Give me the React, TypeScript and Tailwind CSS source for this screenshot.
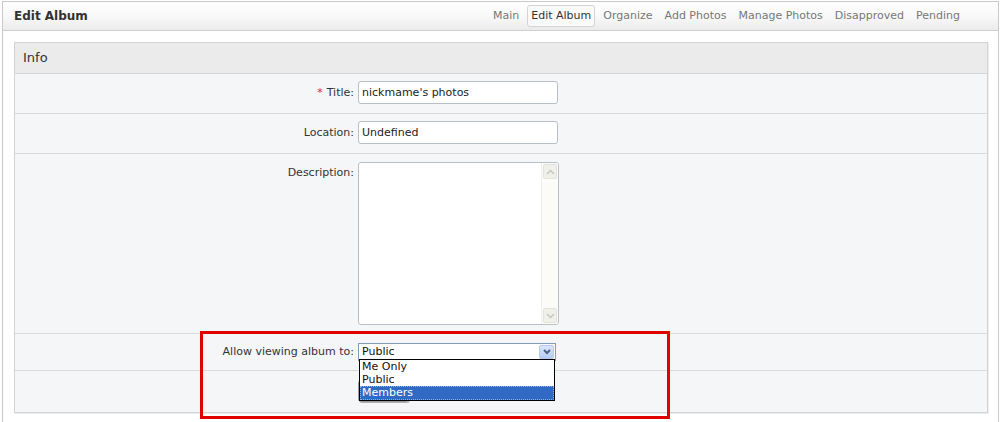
import React from 'react';

const tabs = ['Main', 'Edit Album', 'Organize', 'Add Photos', 'Manage Photos', 'Disapproved', 'Pending'];

function Row({ label, required, h, top, children, last }: { label: string; required?: boolean; h: string; top?: boolean; children?: React.ReactNode; last?: boolean }) {
  return (
    <div className={`flex ${h} ${last ? '' : 'border-b border-[#dadada]'} bg-[#f4f6f8]`}>
      <div className={`w-[343px] pr-[4px] text-right text-[11px] text-[#333] flex justify-end ${top ? 'items-start pt-[11px]' : 'items-center'}`}>
        {required && <span className="text-[#e02020] mr-[4px]">*</span>}
        {label}
      </div>
      <div className="flex-1 relative">{children}</div>
    </div>
  );
}

export default function App() {
  return (
    <div className="w-[1001px] h-[422px] bg-white overflow-hidden relative font-['DejaVu_Sans','Liberation_Sans',sans-serif]">
      <div className="ml-[2px] mr-[2px] mt-[1px] border border-[#c9c9c9] h-[440px]">
        {/* header */}
        <div className="h-[29px] border-b border-[#cfcfcf] bg-gradient-to-b from-white via-[#f9f9f9] to-[#ebebeb] flex items-center justify-between pl-[11px] pr-[34px]">
          <span className="text-[12px] font-bold text-[#333]">Edit Album</span>
          <div className="flex items-center gap-[4px]">
            {tabs.map(t => (
              <span
                key={t}
                className={
                  t === 'Edit Album'
                    ? 'px-[3px] h-[22px] flex items-center border border-[#d4d4d4] rounded-[3px] bg-[#fafafa] text-[11px] text-[#333]'
                    : 'px-[4px] h-[22px] flex items-center text-[11px] text-[#777]'
                }
              >
                {t}
              </span>
            ))}
          </div>
        </div>

        {/* body */}
        <div className="pt-[11px] pl-[11px] pr-[10px]">
          <div className="border border-[#d3d3d3] shadow-[1px_1px_0_#eeeeee]">
            <div className="h-[31px] bg-[#ebebeb] border-b border-[#d6d6d6] flex items-center pl-[8px] text-[13px] text-[#333]">Info</div>

            <Row label="Title:" required h="h-[40px]">
              <input
                readOnly
                value="nickmame's photos"
                className="absolute left-0 top-[7px] w-[200px] h-[23px] border border-[#b8bfc6] rounded-[3px] bg-white px-[3px] text-[11px] text-[#222] outline-none font-['DejaVu_Sans',sans-serif]"
              />
            </Row>
            <Row label="Location:" h="h-[40px]">
              <input
                readOnly
                value="Undefined"
                className="absolute left-0 top-[7px] w-[200px] h-[23px] border border-[#b8bfc6] rounded-[3px] bg-white px-[3px] text-[11px] text-[#222] outline-none font-['DejaVu_Sans',sans-serif]"
              />
            </Row>
            <Row label="Description:" top h="h-[180px]">
              <div className="absolute left-0 top-[8px] w-[201px] h-[163px] border border-[#b8bfc6] rounded-[3px] bg-white flex justify-end overflow-hidden">
                <div className="w-[17px] h-full bg-[#fbfbf8] border-l border-[#f0f0ea] flex flex-col justify-between p-[1px]">
                  <div className="h-[15px] rounded-[2px] border border-[#e3e3dc] bg-[#f0f0ea] flex items-center justify-center">
                    <svg width="9" height="6" viewBox="0 0 9 6"><path d="M1 5 L4.5 1.5 L8 5" fill="none" stroke="#c6c6bd" strokeWidth="1.5" /></svg>
                  </div>
                  <div className="h-[15px] rounded-[2px] border border-[#e3e3dc] bg-[#f0f0ea] flex items-center justify-center">
                    <svg width="9" height="6" viewBox="0 0 9 6"><path d="M1 1 L4.5 4.5 L8 1" fill="none" stroke="#c6c6bd" strokeWidth="1.5" /></svg>
                  </div>
                </div>
              </div>
            </Row>
            <Row label="Allow viewing album to:" h="h-[37px]">
              <div className="absolute left-0 top-[9px] w-[198px] h-[18px] border border-[#7f9db9] bg-white flex items-center justify-between">
                <span className="pl-[3px] text-[11px] text-[#111]">Public</span>
                <div className="w-[15px] h-[14px] mr-[1px] rounded-[2px] bg-gradient-to-b from-[#dbe6fd] to-[#b6ccf8] border border-[#b4c8f5] flex items-center justify-center">
                  <svg width="8" height="6" viewBox="0 0 8 6"><path d="M1 1 L4 4 L7 1" fill="none" stroke="#4d6185" strokeWidth="2" /></svg>
                </div>
              </div>
            </Row>
            <Row label="" h="h-[41px]" last>
              <div className="absolute left-0 top-[9px] w-[51px] h-[22px] border border-[#9a9a9a] rounded-[3px] bg-gradient-to-b from-white to-[#dcdcdc] shadow-[1px_1px_0_#b0b0b0]" />
              {/* open dropdown list */}
              <div className="absolute left-[1px] top-[-12px] w-[196px] border border-black bg-white text-[11px] leading-[13px] text-[#111] z-10">
                <div className="pl-[2px] h-[13px]">Me Only</div>
                <div className="pl-[2px] h-[13px]">Public</div>
                <div className="pl-[2px] h-[14px] bg-[#316ac5] text-white outline outline-1 outline-dotted outline-[#8fb0e8] -outline-offset-1">Members</div>
              </div>
            </Row>
          </div>
        </div>
      </div>

      {/* red highlight annotation */}
      <div className="absolute left-[200px] top-[331px] w-[470px] h-[88px] border-[3px] border-[#e00000] pointer-events-none z-20" />
    </div>
  );
}
